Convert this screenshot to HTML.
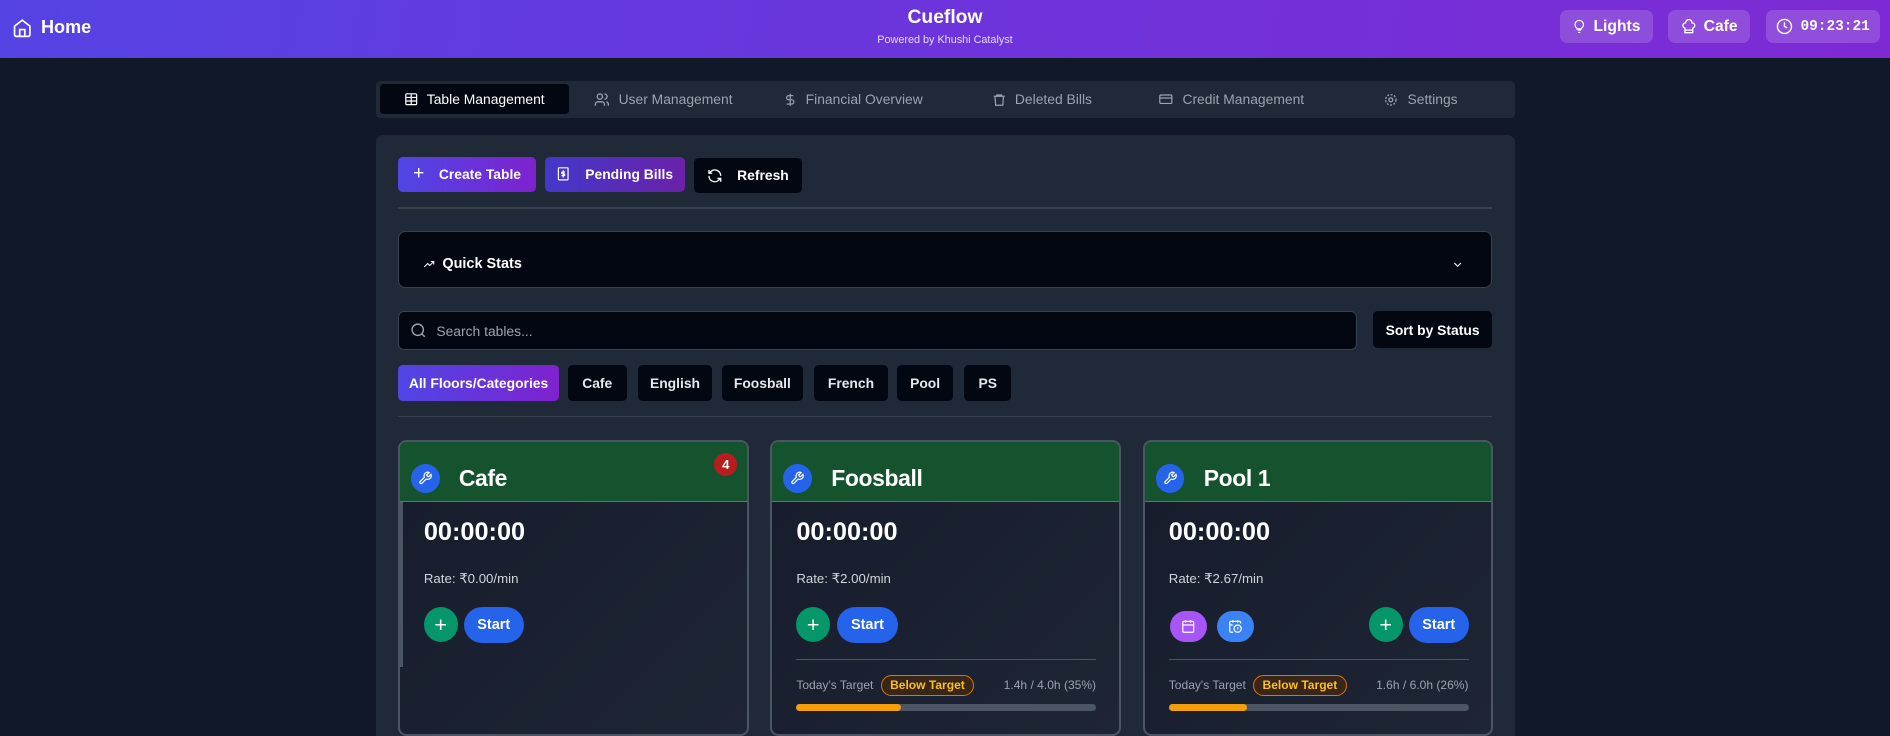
<!DOCTYPE html>
<html><head><meta charset="utf-8">
<style>
*{box-sizing:border-box;margin:0;padding:0}
html,body{width:1890px;height:736px;overflow:hidden;background:#111827}
#r{zoom:1.20536;width:1568px;height:611px;position:relative;font-family:"Liberation Sans",sans-serif;color:#fff;background:#111827}
.a{position:absolute}
.hdr{left:0;top:0;width:1568px;height:48px;background:linear-gradient(100deg,#5543e3,#6d34db 50%,#7e2ad4)}
.hb{top:8px;height:28px;background:rgba(255,255,255,.16);border-radius:6px;display:flex;align-items:center;justify-content:center;gap:6px;font-weight:bold;font-size:13px}
.nav{left:312px;top:67px;width:945px;height:31px;background:#1f2937;border-radius:4px}
.tab{top:3px;height:25px;width:157px;display:flex;align-items:center;justify-content:center;gap:7px;font-size:11.5px;color:#9ca3af}
.tab.on{background:#030712;color:#fff;border-radius:3px}
.main{left:312px;top:112px;width:945px;height:520px;background:#1f2937;border-radius:6px}
.btn{height:29px;border-radius:4px;display:flex;align-items:center;justify-content:center;gap:12px;font-size:11.5px;font-weight:bold}
.dark{background:#030712}
.chip{top:303px;height:30px;border-radius:4px;background:#030712;display:flex;align-items:center;justify-content:center;font-size:11.5px;font-weight:bold;color:#e5e7eb}
.grad{background:linear-gradient(90deg,#4f46e5,#7e22ce) !important}
.hr{height:1px;background:#374151}
.card{top:365px;width:291px;height:246px;border:2px solid #4b5563;border-radius:7px;background:linear-gradient(135deg,#161c2b,#1e2534);overflow:hidden}
.ch{position:absolute;left:0;top:0;right:0;height:50px;background:#14532d;border-bottom:1px solid #16a34a}
.wr{position:absolute;left:9px;top:18px;width:24px;height:24px;border-radius:50%;background:#2563eb;display:flex;align-items:center;justify-content:center}
.tt{position:absolute;left:49px;top:19px;font-size:19px;font-weight:bold;letter-spacing:-0.3px}
.tm{position:absolute;left:20px;top:63px;font-size:21px;font-weight:bold}
.rt{position:absolute;left:20px;top:107px;font-size:11px;color:#d1d5db}
.pl{position:absolute;top:137px;width:28px;height:29px;border-radius:50%;background:#059669;display:flex;align-items:center;justify-content:center;font-size:18px}
.st{position:absolute;top:137px;width:50px;height:30px;border-radius:15px;background:#2563eb;display:flex;align-items:center;justify-content:center;font-size:12px;font-weight:bold}
.dv{position:absolute;left:20px;right:19px;top:180px;height:1px;background:#4b5563}
.tg{position:absolute;left:20px;right:19px;top:193px;height:18px;font-size:10px;color:#9ca3af;display:flex;align-items:center}
.bd{margin-left:6px;border:1px solid #d97706;background:#3a2616;color:#fbbf24;border-radius:9px;padding:2px 7px;font-weight:bold;font-size:10px}
.bar{position:absolute;left:20px;right:19px;top:217px;height:6px;border-radius:3px;background:#4b5563}
.bar i{display:block;height:6px;border-radius:3px;background:#f59e0b}
</style></head><body><div id="r">
<div class="a hdr"></div>
<div class="a" style="left:10px;top:14px;display:flex;align-items:center;gap:7px;font-weight:bold;font-size:15px">
<svg width="17" height="18" viewBox="0 0 24 24" fill="none" stroke="#fff" stroke-width="2"><path d="M3 10l9-7 9 7v10a2 2 0 0 1-2 2H5a2 2 0 0 1-2-2z"/><path d="M9 22v-8h6v8"/></svg>Home</div>
<div class="a" style="left:684px;width:200px;top:6px;text-align:center;font-weight:bold;font-size:16px">Cueflow</div>
<div class="a" style="left:684px;width:200px;top:28px;text-align:center;font-size:9px;color:#e0d8ff">Powered by Khushi Catalyst</div>
<div class="a hb" style="left:1294px;width:77px"><svg width="12" height="14" viewBox="0 0 24 24" fill="none" stroke="#fff" stroke-width="2"><path d="M9 18h6M10 22h4M12 2a7 7 0 0 0-4 12.7V16h8v-1.3A7 7 0 0 0 12 2z"/></svg>Lights</div>
<div class="a hb" style="left:1384px;width:68px"><svg width="13" height="13" viewBox="0 0 24 24" fill="none" stroke="#fff" stroke-width="2"><path d="M6 13.9A4 4 0 0 1 7 6a5 5 0 0 1 10 0 4 4 0 0 1 1 7.9V21H6z"/><path d="M6 17h12"/></svg>Cafe</div>
<div class="a hb" style="left:1465px;width:95px;font-family:'Liberation Mono',monospace;font-size:12px"><svg width="14" height="14" viewBox="0 0 24 24" fill="none" stroke="#fff" stroke-width="2"><circle cx="12" cy="12" r="10"/><path d="M12 6v6l4 2"/></svg>09:23:21</div>

<div class="a nav">
<div class="a tab on" style="left:3px"><svg width="12" height="12" viewBox="0 0 24 24" fill="none" stroke="#fff" stroke-width="2"><rect x="3" y="3" width="18" height="18" rx="2"/><path d="M3 9h18M3 15h18M12 3v18"/></svg>Table Management</div>
<div class="a tab" style="left:160px"><svg width="13" height="13" viewBox="0 0 24 24" fill="none" stroke="#9ca3af" stroke-width="2"><circle cx="9" cy="7" r="4"/><path d="M2 21v-2a4 4 0 0 1 4-4h6a4 4 0 0 1 4 4v2M16 3a4 4 0 0 1 0 8M22 21v-2a4 4 0 0 0-3-3.9"/></svg>User Management</div>
<div class="a tab" style="left:317px"><svg width="12" height="13" viewBox="0 0 24 24" fill="none" stroke="#9ca3af" stroke-width="2"><path d="M12 2v20M17 5H9.5a3.5 3.5 0 0 0 0 7h5a3.5 3.5 0 0 1 0 7H6"/></svg>Financial Overview</div>
<div class="a tab" style="left:474px"><svg width="12" height="13" viewBox="0 0 24 24" fill="none" stroke="#9ca3af" stroke-width="2"><path d="M3 6h18M8 6V4h8v2M5 6l1 15h12l1-15"/></svg>Deleted Bills</div>
<div class="a tab" style="left:631px"><svg width="13" height="12" viewBox="0 0 24 24" fill="none" stroke="#9ca3af" stroke-width="2"><rect x="2" y="5" width="20" height="14" rx="2"/><path d="M2 10h20"/></svg>Credit Management</div>
<div class="a tab" style="left:788px"><svg width="13" height="13" viewBox="0 0 24 24" fill="none" stroke="#9ca3af" stroke-width="2"><circle cx="12" cy="12" r="3"/><circle cx="12" cy="12" r="8" stroke-dasharray="3 2.3"/></svg>Settings</div>
</div>

<div class="a main"></div>
<div class="a btn grad" style="left:330px;top:130px;width:115px"><span style="font-size:16px;font-weight:normal">+</span>Create Table</div>
<div class="a btn" style="left:452px;top:130px;width:116px;background:linear-gradient(90deg,#4338ca,#6b21a8)"><svg width="12" height="13" viewBox="0 0 24 24" fill="none" stroke="#fff" stroke-width="2"><rect x="4" y="2" width="16" height="20" rx="1"/><path d="M12 6v12M15 9h-4a1.5 1.5 0 0 0 0 3h2a1.5 1.5 0 0 1 0 3H9"/></svg>Pending Bills</div>
<div class="a btn dark" style="left:576px;top:131px;width:89px"><svg width="13" height="13" viewBox="0 0 24 24" fill="none" stroke="#fff" stroke-width="2"><path d="M21 12a9 9 0 0 0-15-6.7L3 8M3 3v5h5M3 12a9 9 0 0 0 15 6.7L21 16M21 21v-5h-5"/></svg>Refresh</div>
<div class="a hr" style="left:330px;top:172px;width:908px"></div>
<div class="a" style="left:330px;top:192px;width:908px;height:47px;background:#030712;border:1px solid #374151;border-radius:6px"></div>
<div class="a" style="left:350px;top:212px;display:flex;align-items:center;gap:5px;font-size:12px;font-weight:bold"><svg width="12" height="10" viewBox="0 0 24 24" fill="none" stroke="#fff" stroke-width="2"><path d="M2 18l7-7 4 4 8-8M15 7h6v6"/></svg>Quick Stats</div>
<svg class="a" style="left:1204px;top:214px" width="11" height="11" viewBox="0 0 24 24" fill="none" stroke="#fff" stroke-width="2"><path d="M6 9l6 6 6-6"/></svg>
<div class="a" style="left:330px;top:258px;width:796px;height:32px;background:#030712;border:1px solid #374151;border-radius:5px"></div>
<svg class="a" style="left:340px;top:267px" width="14" height="14" viewBox="0 0 24 24" fill="none" stroke="#9ca3af" stroke-width="2"><circle cx="11" cy="11" r="8"/><path d="M21 21l-4.3-4.3"/></svg>
<div class="a" style="left:362px;top:268px;font-size:11.5px;color:#9ca3af">Search tables...</div>
<div class="a btn dark" style="left:1139px;top:258px;width:99px;height:31px">Sort by Status</div>
<div class="a chip grad" style="left:330px;width:134px;color:#fff">All Floors/Categories</div>
<div class="a chip" style="left:471px;width:49px">Cafe</div>
<div class="a chip" style="left:529px;width:62px">English</div>
<div class="a chip" style="left:599px;width:67px">Foosball</div>
<div class="a chip" style="left:675px;width:62px">French</div>
<div class="a chip" style="left:744px;width:47px">Pool</div>
<div class="a chip" style="left:800px;width:39px">PS</div>
<div class="a hr" style="left:330px;top:345px;width:908px"></div>

<!-- card 1 -->
<div class="a card" style="left:330px">
<div class="ch"><div class="wr"><svg width="12" height="12" viewBox="0 0 24 24" fill="none" stroke="#fff" stroke-width="2"><path d="M14.7 6.3a1 1 0 0 0 0 1.4l1.6 1.6a1 1 0 0 0 1.4 0l3.8-3.8a6 6 0 0 1-7.9 7.9l-6.9 6.9a2.1 2.1 0 0 1-3-3l6.9-6.9a6 6 0 0 1 7.9-7.9z"/></svg></div><div class="tt">Cafe</div>
<div style="position:absolute;left:261px;top:9px;width:19px;height:19px;border-radius:50%;background:#b91c1c;font-size:11px;font-weight:bold;display:flex;align-items:center;justify-content:center">4</div></div>
<div style="position:absolute;left:0;top:50px;width:3px;height:137px;background:#4b5563"></div>
<div class="tm">00:00:00</div><div class="rt">Rate: ₹0.00/min</div>
<div class="pl" style="left:20px">+</div><div class="st" style="left:53px">Start</div>
</div>
<!-- card 2 -->
<div class="a card" style="left:639px">
<div class="ch"><div class="wr"><svg width="12" height="12" viewBox="0 0 24 24" fill="none" stroke="#fff" stroke-width="2"><path d="M14.7 6.3a1 1 0 0 0 0 1.4l1.6 1.6a1 1 0 0 0 1.4 0l3.8-3.8a6 6 0 0 1-7.9 7.9l-6.9 6.9a2.1 2.1 0 0 1-3-3l6.9-6.9a6 6 0 0 1 7.9-7.9z"/></svg></div><div class="tt">Foosball</div></div>
<div class="tm">00:00:00</div><div class="rt">Rate: ₹2.00/min</div>
<div class="pl" style="left:20px">+</div><div class="st" style="left:54px">Start</div>
<div class="dv"></div>
<div class="tg">Today's Target<span class="bd">Below Target</span><span style="margin-left:auto">1.4h / 4.0h (35%)</span></div>
<div class="bar"><i style="width:35%"></i></div>
</div>
<!-- card 3 -->
<div class="a card" style="left:948px">
<div class="ch"><div class="wr"><svg width="12" height="12" viewBox="0 0 24 24" fill="none" stroke="#fff" stroke-width="2"><path d="M14.7 6.3a1 1 0 0 0 0 1.4l1.6 1.6a1 1 0 0 0 1.4 0l3.8-3.8a6 6 0 0 1-7.9 7.9l-6.9 6.9a2.1 2.1 0 0 1-3-3l6.9-6.9a6 6 0 0 1 7.9-7.9z"/></svg></div><div class="tt">Pool 1</div></div>
<div class="tm">00:00:00</div><div class="rt">Rate: ₹2.67/min</div>
<div style="position:absolute;left:21px;top:140px;width:31px;height:26px;border-radius:13px;background:#a855f7;display:flex;align-items:center;justify-content:center"><svg width="12" height="12" viewBox="0 0 24 24" fill="none" stroke="#fff" stroke-width="2"><rect x="3" y="4" width="18" height="18" rx="2"/><path d="M16 2v4M8 2v4M3 10h18"/></svg></div>
<div style="position:absolute;left:60px;top:140px;width:31px;height:26px;border-radius:13px;background:#3b82f6;display:flex;align-items:center;justify-content:center"><svg width="12" height="12" viewBox="0 0 24 24" fill="none" stroke="#fff" stroke-width="2"><path d="M21 7.5V6a2 2 0 0 0-2-2H5a2 2 0 0 0-2 2v14a2 2 0 0 0 2 2h3.5M16 2v4M8 2v4M3 10h5"/><circle cx="16" cy="16" r="6"/><path d="M16 14v2l1 1"/></svg></div>
<div class="pl" style="left:186px">+</div><div class="st" style="left:219px;width:50px">Start</div>
<div class="dv"></div>
<div class="tg">Today's Target<span class="bd">Below Target</span><span style="margin-left:auto">1.6h / 6.0h (26%)</span></div>
<div class="bar"><i style="width:26%"></i></div>
</div>
</div></body></html>
